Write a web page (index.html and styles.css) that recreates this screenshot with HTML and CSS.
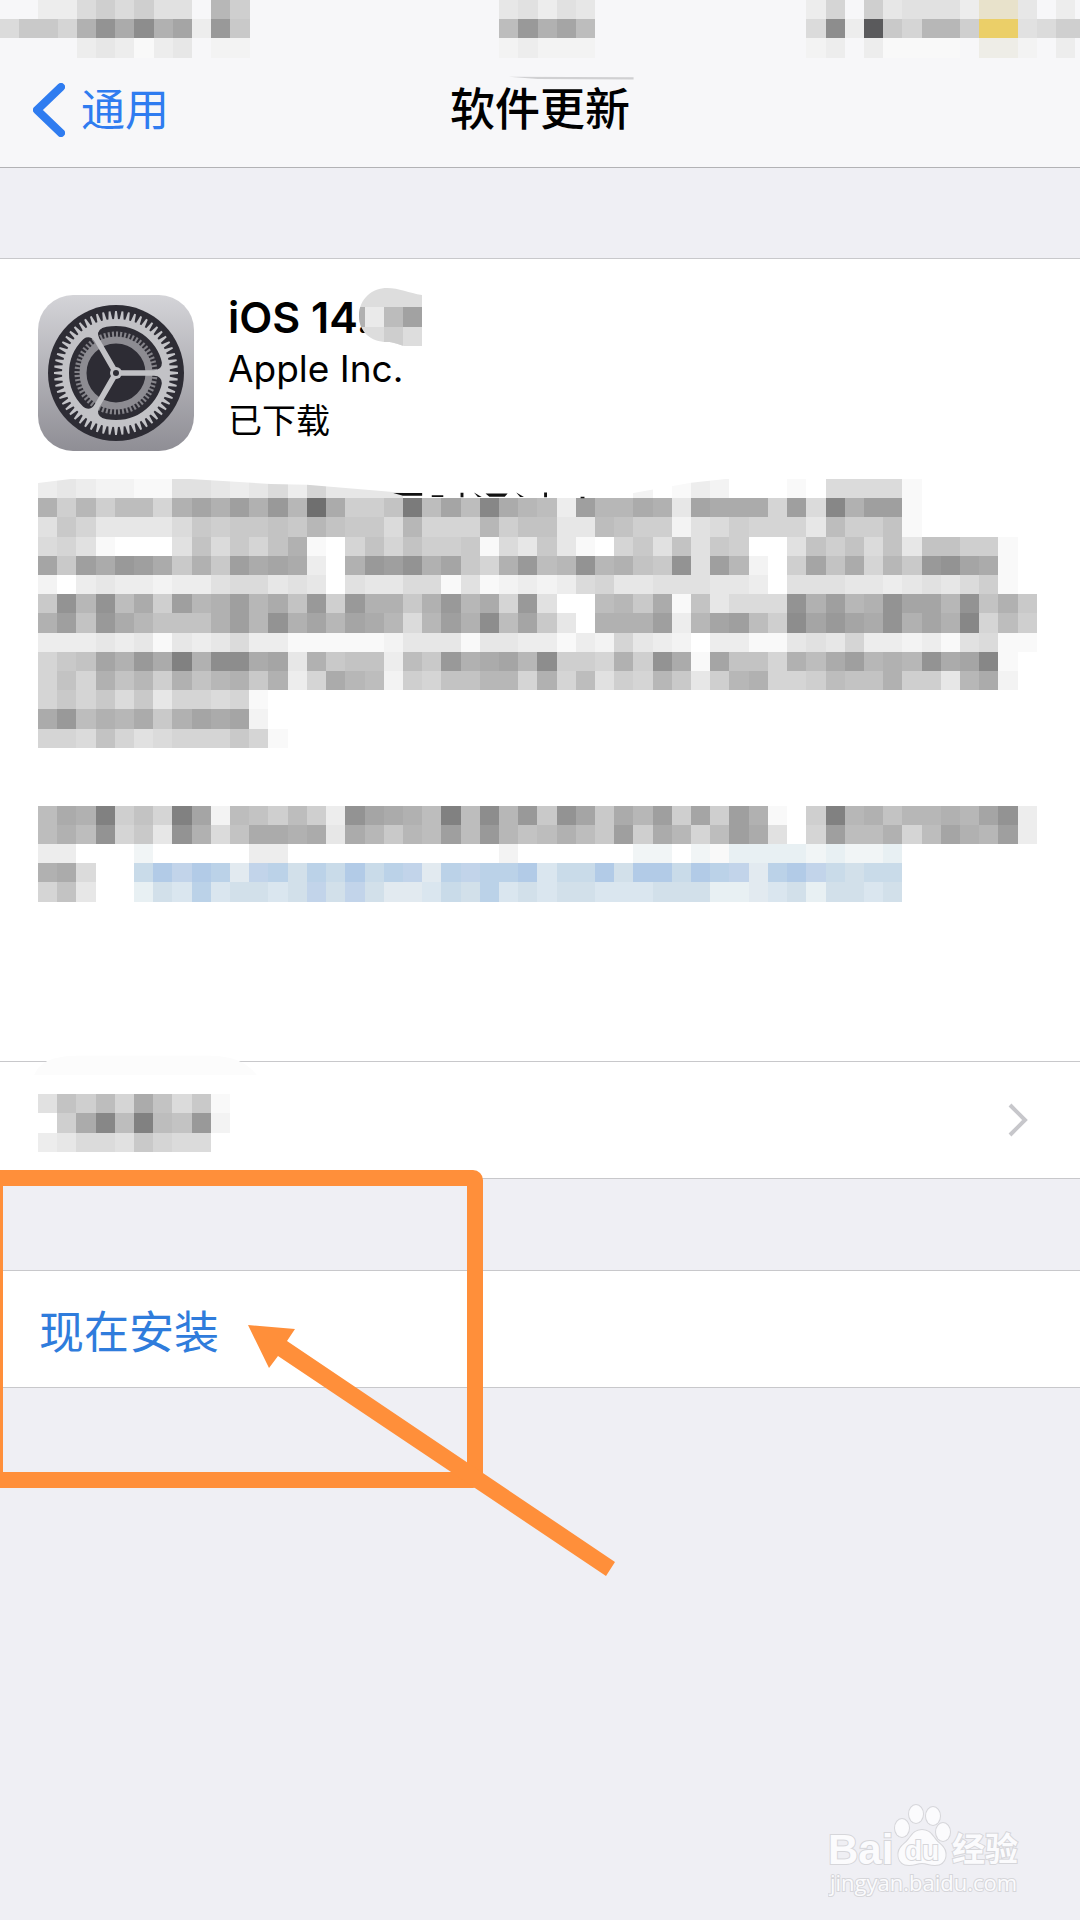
FILE: index.html
```html
<!DOCTYPE html>
<html lang="zh-CN">
<head>
  <meta charset="UTF-8">
  <meta name="viewport" content="width=device-width, initial-scale=1">
  <title>软件更新</title>
  <link rel="stylesheet" href="styles.css">
</head>
<body>
  <div class="page">
    <header class="header">
      <svg class="mosaic status-bar" viewBox="0 0 56.25 3" data-mosaic="status" aria-hidden="true">
        <path d="M26.5 4 33 4.02V4.14L28 4.12Z" fill="#d0d0d2"/>
      </svg>
      <nav class="nav">
        <a class="back" href="#">
          <svg class="back-icon" viewBox="0 0 32 54" aria-hidden="true">
            <path d="M28 4 4 27 28 50" fill="none" stroke="currentColor" stroke-width="8" stroke-linecap="round" stroke-linejoin="round"/>
          </svg>
          <span>通用</span>
        </a>
        <h1 class="title">软件更新</h1>
      </nav>
    </header>

    <main>
      <section class="card update">
        <div class="summary">
          <svg class="app-icon" viewBox="0 0 156 156" aria-hidden="true">
            <defs>
              <linearGradient id="plate" x1="0" y1="0" x2="0" y2="1">
                <stop offset="0" stop-color="#d4d4d8"/>
                <stop offset="1" stop-color="#8f8e95"/>
              </linearGradient>
              <path id="tooth" d="M53 -2.1 62 -.9V.9L53 2.1Z"/>
              <path id="arm" d="M0 -2.8H38Q46 -3 46 -11L50 -13V13L46 11Q46 3 38 2.8H0Z"/>
            </defs>
            <rect width="156" height="156" rx="35" fill="url(#plate)"/>
            <circle cx="78" cy="78" r="68" fill="#2d2c34"/>
            <g transform="translate(78 78)" fill="none">
              <circle r="38.5" stroke="#85848a" stroke-width="6" pathLength="120" stroke-dasharray="1 1"/>
              <circle r="33" stroke="#8d8c92" stroke-width="7"/>
              <g id="teeth" fill="#c4c4c8"></g>
              <circle r="50.5" stroke="#c2c2c6" stroke-width="7"/>
              <g fill="#c2c2c6">
                <use href="#arm"/>
                <use href="#arm" transform="rotate(120)"/>
                <use href="#arm" transform="rotate(240)"/>
                <circle r="6"/>
              </g>
              <circle r="3" fill="#2d2c34"/>
            </g>
          </svg>
          <div class="info">
            <h2 class="version">
              <span>iOS 14.</span>
              <svg class="mosaic version-cover" viewBox="0 0 64 60" aria-hidden="true">
                <defs>
                  <clipPath id="blob"><path d="M0 28C0 10 14 0 28 0C40 0 50 5 63 7V58H45C38 56 34 54 28 54C12 54 0 44 0 28Z"/></clipPath>
                </defs>
                <g clip-path="url(#blob)">
                  <path d="M0 0H64V60H0Z" fill="#dddddd"/>
                  <path d="M0 19H6V39H0Z" fill="#b0b0b0"/>
                  <path d="M6 19H25V39H6Z" fill="#eaeaea"/>
                  <path d="M25 19H44V39H25Z" fill="#bcbcbc"/>
                  <path d="M44 19H64V39H44Z" fill="#a2a2a2"/>
                  <path d="M25 39H44V60H25Z" fill="#cecece"/>
                </g>
              </svg>
            </h2>
            <p class="vendor">Apple Inc.</p>
            <p class="state">已下载</p>
          </div>
        </div>
        <svg class="mosaic description" viewBox="0 0 53 23" data-mosaic="description" aria-hidden="true">
          <path d="M-.1 -.1V.22L1.7 0H7.9L12.1 .26 14 .3 18.8 .7 22 .9 26.6 .97H29.3L31 .73 34 .2 35.8 0V-.1Z" fill="#fff"/>
          <path d="M18.5 .73H20V.87H19ZM20.5 .84H21.1V.94H20.5ZM22 .72H22.15V.95H22ZM22.7 .7 23.1 .94H22.9ZM23.3 .76H24.45L24.3 .92H23.5ZM24.9 .7 25.3 .94H25.1ZM26.35 .7H26.5V.95H26.35ZM28.25 .93H28.45V1H28.25Z" fill="#111"/>
        </svg>
      </section>

      <a class="card more" href="#" aria-label="更多">
        <svg class="mosaic more-label" viewBox="0 0 10 3" data-mosaic="more" aria-hidden="true">
          <path d="M-.2 -1Q.2 -2 2 -2H9Q10.6 -2 11.4 -1Z" fill="#fcfcfc"/>
        </svg>
        <svg class="more-icon" viewBox="0 0 20 52" aria-hidden="true">
          <path d="M2 11 17 26 2 41" fill="none" stroke="#c7c7cb" stroke-width="4"/>
        </svg>
      </a>

      <button class="card install" type="button">现在安装</button>
    </main>

    <svg class="callout" viewBox="0 1160 640 430" aria-hidden="true">
      <rect x="-5" y="1178" width="480" height="302" rx="2" fill="none" stroke="#ff8f3a" stroke-width="16" stroke-linejoin="round"/>
      <path d="M248 1325 295 1329 287 1341 615 1562 606 1576 278 1356 269 1368Z" fill="#ff8f3a"/>
    </svg>

    <svg class="watermark" viewBox="0 0 200 100" role="img" aria-label="Baidu 经验">
      <g fill="#fbfbfd" stroke="#d6d6da" stroke-width="2" paint-order="stroke">
        <text class="mark-latin" x="0" y="64">Bai</text>
        <ellipse cx="74" cy="28" rx="7" ry="9"/>
        <ellipse cx="88" cy="14" rx="7" ry="9"/>
        <ellipse cx="105" cy="16" rx="7" ry="9"/>
        <ellipse cx="115" cy="32" rx="7" ry="9"/>
        <path d="M94 30C104 30 105 39 112 44C121 51 119 65 107 65C102 65 98 63 94 63C90 63 86 65 81 65C69 65 67 51 76 44C83 39 84 30 94 30Z"/>
        <text class="mark-du" x="77" y="60">du</text>
        <text class="mark-cjk" x="124" y="61">经验</text>
        <text class="mark-url" x="2" y="91">jingyan.baidu.com</text>
      </g>
    </svg>
  </div>
  <script src="mosaic.js"></script>
</body>
</html>
```

FILE: styles.css
```css
* {
  box-sizing: border-box;
}
body {
  margin: 0;
  background-color: #efeff4;
  color: #000;
  font-family: Inter, 'Noto Sans CJK SC', sans-serif;
}
h1, h2, p {
  margin: 0;
}
.page {
  position: relative;
  min-height: 100vh;
  overflow: hidden;
}
.mosaic {
  display: block;
  overflow: visible;
}

/* header */
.header {
  background-color: #f7f7f9;
  border-bottom: 1px solid #b2b2b5;
}
.status-bar {
  width: 100%;
}
.nav {
  display: grid;
  grid-template-columns: 1fr auto 1fr;
  align-items: center;
  height: 109px;
  padding: 0 33px 4px;
}
.back {
  display: flex;
  align-items: center;
  gap: 16px;
  color: #2f7cf0;
  font-size: 44px;
  line-height: 52px;
  text-decoration: none;
}
.back-icon {
  width: 32px;
  height: 54px;
}
.title {
  font-size: 45px;
  line-height: 52px;
  font-weight: 500;
}

/* white rows */
.card {
  display: block;
  width: 100%;
  background-color: #fff;
  border: 0 solid #c8c8cb;
  border-width: 1px 0;
}
.update {
  margin-top: 90px;
  padding: 36px 24px 141px 38px;
  border-bottom: 0;
}
.summary {
  display: flex;
  gap: 34px;
  align-items: flex-start;
}
.app-icon {
  width: 156px;
  height: 156px;
}
.info {
  margin-top: -4px;
}
.version,
.vendor,
.state {
  line-height: 52px;
}
.version {
  position: relative;
  width: max-content;
  font-size: 43px;
  font-weight: 600;
}
.version-cover {
  position: absolute;
  top: -3px;
  left: 131px;
  width: 64px;
  height: 60px;
}
.vendor {
  font-size: 37px;
}
.state {
  font-size: 34px;
}
.description {
  width: 100%;
  margin-top: 28px;
}
.more {
  display: flex;
  justify-content: space-between;
  align-items: flex-start;
  padding: 32px 52px 26px 38px;
}
.more-label {
  width: 192px;
  height: 58px;
}
.more-icon {
  width: 20px;
  height: 52px;
}
.install {
  margin-top: 91px;
  padding: 36px 39px 28px;
  color: #2f7cdc;
  font-family: inherit;
  font-size: 45px;
  line-height: 52px;
  text-align: left;
}

/* orange frame and arrow over the install row */
.callout {
  position: absolute;
  top: 1160px;
  left: 0;
  width: 640px;
  height: 430px;
  pointer-events: none;
}

.watermark {
  position: absolute;
  right: 52px;
  bottom: 20px;
  width: 200px;
  height: 100px;
}
.mark-latin {
  font: bold 42px 'Liberation Sans', sans-serif;
}
.mark-du {
  font: bold 28px 'Liberation Sans', sans-serif;
}
.mark-cjk {
  font: bold 33px 'Noto Sans CJK SC', sans-serif;
}
.mark-url {
  font: 22px 'Open Sans', sans-serif;
}
```

FILE: mosaic.js
```js
const SVG_NS = 'http://www.w3.org/2000/svg';

// One character per tile: a-z run from white to dark grey, the rest is below.
const tints = {
  '0': '#b2cbe7', '1': '#bbd2e8', '2': '#c2d4ea', '3': '#c9dbe9', '4': '#d2e0ea',
  '5': '#dae6ef', '6': '#e2eaf0', '7': '#e8f0f3', '8': '#f1f5f6',
  '#': '#5a5a5c', '-': '#e8e2cb', '+': '#ebcf68', '~': '#eeede7'
};

const mosaics = {
  status: [
    '..ddgigiff.mi.............efdfe...........dh.iefffd--e.d',
    'gjjhnsotnpdrj.............lrnpl...........gtd#jhmmi++fgii',
    '....dedbde.cc.............cdccc...........cd.dbbbb.~~c.d'
  ],
  description: [
    'dedccbbffedegdheeeeaaaaaaaaaaaacabdcaaabaggggb',
    'nimillhnpnqnrmyoiikwlpluomldqmmonepooohqgunqqb',
    'fjheeeegjijjkjmkjjgmhhhmikkeelkiicfgihhheliikb',
    'ghfbaaafkgjhknbahkhkiijbgejebahjfkfjiaafkikgkekkiib',
    'pjqorqojnjqopodanrqsnpjhnrlmsmnkjsfqmcaipkohmjrspob',
    'cadeddcddfggefeafeeggbfbcdcdgheefffeedafffeedefegib',
    'jsmsloiqmnqmokrirnnjnrmohrfaalmjobkegggsnqmnsppmsknj',
    'nqkromkkknqmsnpmpomgmqntlpjeannnqdmpqlitprposnpnuhli',
    'dddedebedegddbbbbbceeebeeddbdchedcaddbbefehddcdbfgbb',
    'hjkpnrovnttopenjkkdljrnopmtiihnisobpkkhnloqmnmsopub',
    'hkhnkminkmnjndhomlcihkkmmhnhlfihmjeimnhhilkkniiemoc',
    'hjhjgjehhghb',
    'orlnmojnpopc',
    'hhgkhfghhhjhb',
    '',
    '',
    '',
    'lonvikhvpclkilidsponlvltmrjspjomqipiqnbaivmnkmmnmpsd',
    'lnlshjesngkoonoeomjmlqlrmklnljqiomhlqofahqllnhlpnmqd',
    'ddaaa8aaaaaddaaaaaaaaaaacaaaaaa88a8b777787887',
    'nogaa3020162141303126121105330400301261023433',
    'hkeaa7451544542424665341545445554447765474454'
  ],
  more: [
    'fkilhokgjb',
    'aioulvlkrc',
    'deggfjhgg'
  ]
};

function tileColor(ch) {
  if (tints[ch]) return tints[ch];
  const v = 255 - (ch.charCodeAt(0) - 97) * 6;
  return `rgb(${v}, ${v}, ${v})`;
}

document.querySelectorAll('[data-mosaic]').forEach(svg => {
  const group = document.createElementNS(SVG_NS, 'g');
  group.setAttribute('shape-rendering', 'crispEdges');
  mosaics[svg.dataset.mosaic].forEach((row, y) => {
    [...row].forEach((ch, x) => {
      if (ch === '.' || ch === 'a') return;
      const tile = document.createElementNS(SVG_NS, 'rect');
      tile.setAttribute('x', x);
      tile.setAttribute('y', y);
      tile.setAttribute('width', 1);
      tile.setAttribute('height', 1);
      tile.setAttribute('fill', tileColor(ch));
      group.appendChild(tile);
    });
  });
  svg.prepend(group);
});

// teeth of the outer gear wheel
const teeth = document.getElementById('teeth');
for (let i = 0; i < 60; i++) {
  const tooth = document.createElementNS(SVG_NS, 'use');
  tooth.setAttribute('href', '#tooth');
  tooth.setAttribute('transform', `rotate(${i * 6})`);
  teeth.appendChild(tooth);
}
```
